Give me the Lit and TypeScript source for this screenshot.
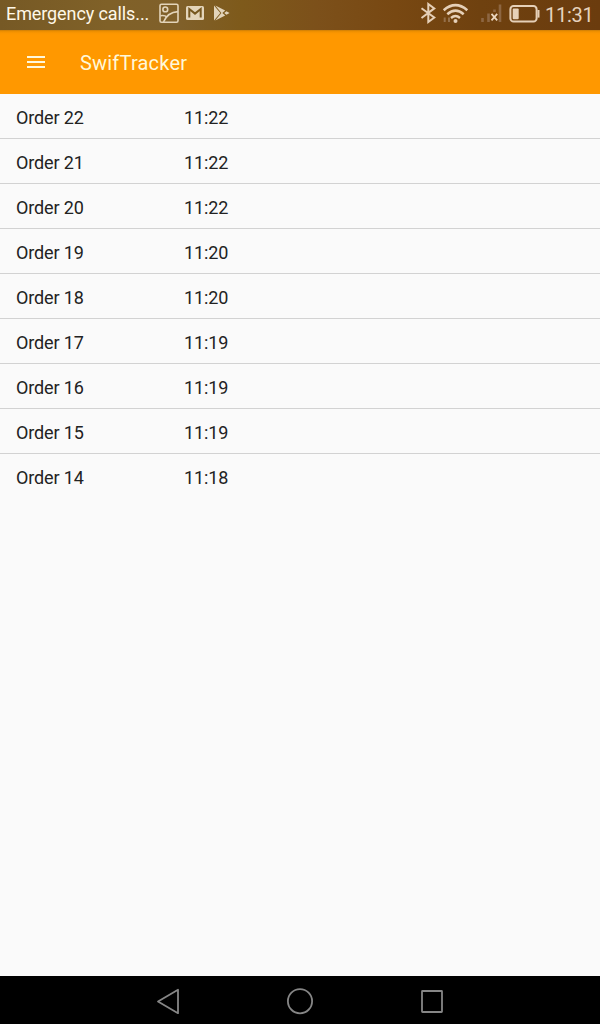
import { LitElement, html, css } from "lit";
import { customElement } from "lit/decorators.js";

const orders: [string, string][] = [
  ["Order 22", "11:22"],
  ["Order 21", "11:22"],
  ["Order 20", "11:22"],
  ["Order 19", "11:20"],
  ["Order 18", "11:20"],
  ["Order 17", "11:19"],
  ["Order 16", "11:19"],
  ["Order 15", "11:19"],
  ["Order 14", "11:18"],
];

@customElement("status-bar")
class StatusBar extends LitElement {
  static styles = css`
    :host {
      display: flex;
      height: 30px;
      padding: 0 7px 0 6px;
      box-sizing: border-box;
      background: linear-gradient(90deg, #765925 0%, #806128 18%, #80602a 30%, #7e5a1b 40%, #7c501a 53%, #784812 66%, #6f410f 80%, #6b3c0e 100%);
      color: #fff8e8;
      white-space: nowrap;
    }
    svg { display: block; flex: none; }
    .carrier { width: 149px; font-size: 18px; line-height: 28px; letter-spacing: -0.1px; }
    .space { flex: 1; }
    .clock { width: 48px; margin-left: 5px; font-size: 20px; line-height: 31px; color: #e6d3bd; letter-spacing: -0.25px; }
  `;
  render() {
    return html`
      <div class="carrier">Emergency calls...</div>
      <svg width="84" height="30" viewBox="155 0 84 30" fill="none" stroke="#e3d4ba" stroke-width="1.6">
        <rect x="160" y="4.2" width="18" height="18" rx="1.5"/>
        <circle cx="165.3" cy="9.4" r="2.4"/>
        <path d="M163.5 22Q167.5 12.2 178 11.6M160.5 15.8Q164.5 14.8 167 17.2"/>
        <rect x="186" y="6" width="18" height="14" rx="1.5" fill="#e3d4ba" stroke="none"/>
        <path d="M189.3 17.5V9L195 13.6L200.7 9V17.5" stroke="#76571f" stroke-width="2"/>
        <path d="M214 5.5L220.3 13L214 20.5Z M215.3 5.5L225.2 10.6L222.3 13L225.2 15.4L215.3 20.5L221.4 13Z M226.4 11.2L229.6 13L226.4 14.8L224.3 13Z" fill="#e3d4ba" stroke="none"/>
      </svg>
      <div class="space"></div>
      <svg width="122" height="30" viewBox="418 0 122 30" fill="none" stroke="#e6d0b8" stroke-width="2">
        <path d="M421.5 8.2L434.3 17.5L428.3 22V4L434.3 8.4L421.5 18"/>
        <path d="M443.7 10.2Q455.5 0.2 467.3 10.2" stroke-width="2.6"/>
        <path d="M447.3 14.2Q455.5 7 463.7 14.2" stroke-width="2.5"/>
        <path d="M451 18Q455.5 14.1 460 18" stroke-width="2.4"/>
        <circle cx="455.5" cy="21" r="2" fill="#e6d0b8" stroke="none"/>
        <path d="M444.7 22V17.5M449 22V17.5" stroke="#94704b" stroke-width="2"/>
        <path d="M482.5 22V18M488.5 22V13.5M494.5 12V9.5M500 22V4.5" stroke="#8d6642" stroke-width="2.6"/>
        <path d="M491.5 13.8L497.2 20.3M497.2 13.8L491.5 20.3" stroke="#ead6bf" stroke-width="1.8"/>
        <rect x="510.4" y="6" width="26.2" height="15.6" rx="3.2"/>
        <rect x="512.7" y="8.5" width="6" height="10.8" rx="1" fill="#e6d0b8" stroke="none"/>
        <path d="M538.5 10V17.6" stroke-width="2"/>
      </svg>
      <div class="clock">11:31</div>
    `;
  }
}

@customElement("app-root")
class AppRoot extends LitElement {
  static styles = css`
    :host {
      display: flex;
      flex-direction: column;
      width: 600px;
      height: 1024px;
      background: #fafafa;
      font-family: Roboto, "Noto Sans", sans-serif;
      overflow: hidden;
    }
    .toolbar {
      display: flex;
      align-items: center;
      height: 64px;
      box-sizing: border-box;
      padding: 2px 0 0 27px;
      background: linear-gradient(#c67a08 0, #ea8d00 1px, #fb9600 3px, #ff9800 5px);
      color: #fff8da;
    }
    .toolbar svg { display: block; margin: 0 35px 2px 0; }
    .title { font-size: 20px; line-height: 26px; letter-spacing: 0.2px; }
    .orders { flex: 1; }
    .order {
      display: flex;
      height: 45px;
      box-sizing: border-box;
      padding: 2px 16px 0;
      border-bottom: 1px solid #d2d2d2;
      font-size: 18px;
      line-height: 44px;
      letter-spacing: -0.13px;
      color: #222;
    }
    .order:last-child { border-bottom: 0; }
    .name { width: 168px; }
    .nav { height: 48px; background: #000; }
    .nav svg { display: block; }
  `;
  render() {
    return html`
      <status-bar></status-bar>
      <div class="toolbar">
        <svg width="18" height="12" viewBox="0 0 18 12" fill="#fff8dc"><path d="M0 0h18v2H0zM0 5h18v2H0zM0 10h18v2H0z"/></svg>
        <div class="title">SwifTracker</div>
      </div>
      <div class="orders">
        ${orders.map(([name, time]) => html`<div class="order"><span class="name">${name}</span><span>${time}</span></div>`)}
      </div>
      <div class="nav">
        <svg width="600" height="48" viewBox="0 976 600 48" fill="none" stroke="#868686" stroke-width="1.8" stroke-linejoin="round">
          <path d="M158 1001.5L178 989.8V1013.2Z"/>
          <circle cx="300" cy="1001.2" r="12.1"/>
          <rect x="422" y="991" width="20" height="21" rx="0.5"/>
        </svg>
      </div>
    `;
  }
}
